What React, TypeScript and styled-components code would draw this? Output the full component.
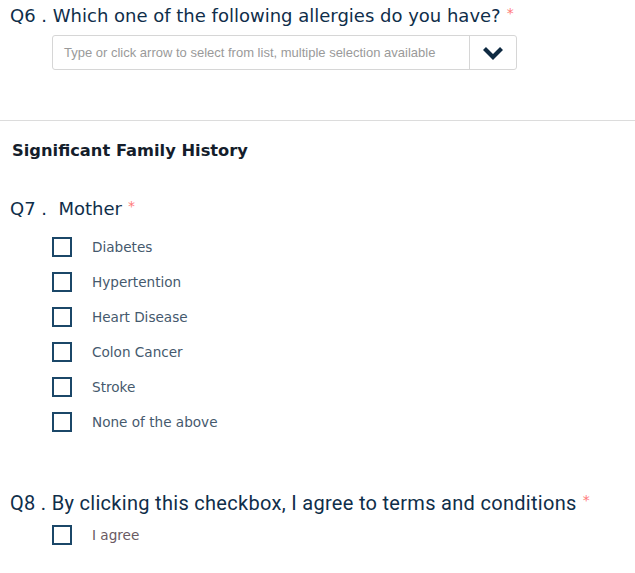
import React from 'react'
import styled, { createGlobalStyle } from 'styled-components'

const Global = createGlobalStyle`
  html, body {
    margin: 0;
    padding: 0;
    background: #ffffff;
  }
  body {
    font-family: 'DejaVu Sans', 'Noto Sans', sans-serif;
  }
`

const Page = styled.div`
  width: 635px;
  padding-top: 4px;
`

const Section = styled.div`
  padding: 0 10px;
  margin-top: ${({ top }) => top || 0}px;
`

const Question = styled.div`
  display: flex;
  align-items: baseline;
  font-size: ${({ alt }) => (alt ? 20 : 18)}px;
  font-family: ${({ alt }) => (alt ? "Roboto, 'Liberation Sans', sans-serif" : "'DejaVu Sans', sans-serif")};
  letter-spacing: ${({ alt }) => (alt ? 0.3 : 0)}px;
  color: #0f2e4a;
  line-height: 24px;
  margin-bottom: ${({ mb }) => mb || 0}px;
`

const Star = styled.span`
  color: #ff7a7a;
  font-family: 'DejaVu Sans', sans-serif;
  font-size: 14px;
  letter-spacing: 0;
  margin-left: 6px;
  align-self: flex-start;
  line-height: 18px;
`

const Picker = styled.div`
  display: flex;
  margin-left: 42px;
  width: 465px;
  height: 35px;
  border: 1px solid #d6d6d6;
  border-radius: 3px;
  box-sizing: border-box;
`

const PickerInput = styled.div`
  flex: 1;
  display: flex;
  align-items: center;
  padding-left: 11px;
  font-family: 'Liberation Sans', Arial, sans-serif;
  font-size: 13px;
  color: #9a9a9a;
  border-right: 1px solid #d6d6d6;
`

const PickerButton = styled.div`
  width: 46px;
  display: flex;
  align-items: center;
  justify-content: center;
`

const Divider = styled.hr`
  border: 0;
  border-top: 1px solid #dcdcdc;
  margin: 50px 0 0;
`

const Heading = styled.h2`
  margin: 19px 0 0 12px;
  font-family: 'DejaVu Sans', sans-serif;
  font-weight: 600;
  font-size: 16.3px;
  color: #141d2b;
  line-height: 22px;
`

const Options = styled.div`
  display: flex;
  flex-direction: column;
  gap: 15px;
  padding-left: 42px;
`

const Option = styled.label`
  display: flex;
  align-items: center;
  gap: 20px;
  font-family: 'DejaVu Sans', sans-serif;
  font-size: 13.6px;
  color: ${({ muted }) => (muted ? '#6a5a62' : '#45596d')};
  height: 20px;
`

const Box = styled.span`
  width: 20px;
  height: 20px;
  box-sizing: border-box;
  border: 2px solid #1b4768;
  flex-shrink: 0;
`

const Chevron = () => (
  <svg width="22" height="14" viewBox="0 0 22 14">
    <path d="M2.5 2.5 L11 11 L19.5 2.5" fill="none" stroke="#0f2a42" strokeWidth="4.2" strokeLinecap="butt" strokeLinejoin="miter" />
  </svg>
)

const motherOptions = ['Diabetes', 'Hypertention', 'Heart Disease', 'Colon Cancer', 'Stroke', 'None of the above']

const App = () => (
  <Page>
    <Global />
    <Section>
      <Question mb={7}>
        Q6 . Which one of the following allergies do you have?<Star>*</Star>
      </Question>
      <Picker>
        <PickerInput>Type or click arrow to select from list, multiple selection available</PickerInput>
        <PickerButton>
          <Chevron />
        </PickerButton>
      </Picker>
    </Section>
    <Divider />
    <Heading>Significant Family History</Heading>
    <Section top={35}>
      <Question mb={16}>
        Q7 .&nbsp; Mother<Star>*</Star>
      </Question>
      <Options>
        {motherOptions.map((o) => (
          <Option key={o}>
            <Box />
            {o}
          </Option>
        ))}
      </Options>
    </Section>
    <Section top={59}>
      <Question alt mb={10}>
        Q8 . By clicking this checkbox, I agree to terms and conditions<Star>*</Star>
      </Question>
      <Options>
        <Option muted>
          <Box />
          I agree
        </Option>
      </Options>
    </Section>
  </Page>
)

export default App
